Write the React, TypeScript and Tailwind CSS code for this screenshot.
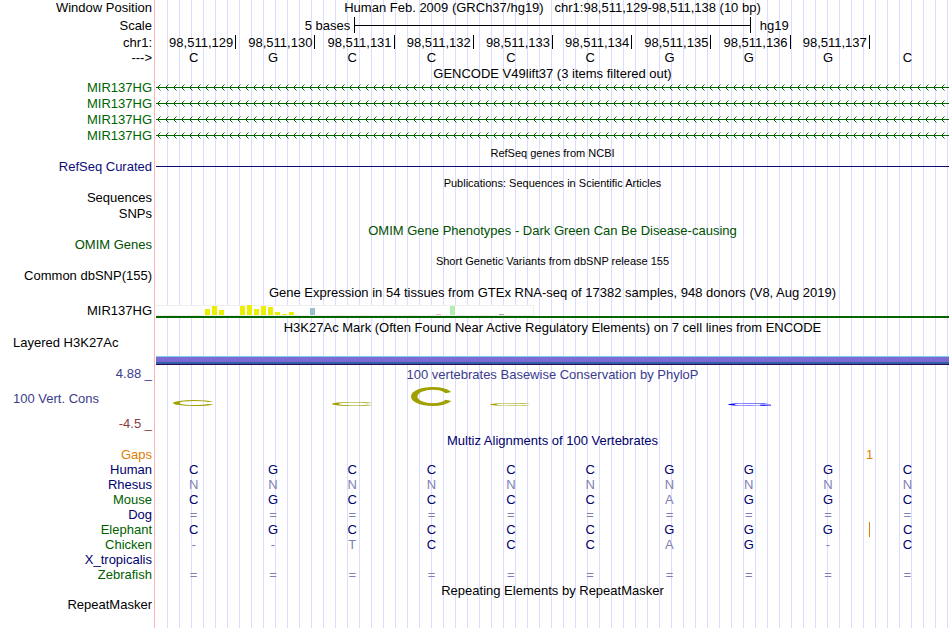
import React from 'react';
import clsx from 'clsx';

const positions = [
  '98,511,129',
  '98,511,130',
  '98,511,131',
  '98,511,132',
  '98,511,133',
  '98,511,134',
  '98,511,135',
  '98,511,136',
  '98,511,137',
];

const sequence = 'CGCCCCGGGC';

const species = [
  { name: 'Human', bases: 'CGCCCCGGGC', color: 'text-[#00006e]' },
  { name: 'Rhesus', bases: 'NNNNNNNNNN', color: 'text-[#00006e]' },
  { name: 'Mouse', bases: 'CGCCCCAGGC', color: 'text-[#006000]' },
  { name: 'Dog', bases: '==========', color: 'text-[#00006e]' },
  { name: 'Elephant', bases: 'CGCCCCGGGC', color: 'text-[#006000]', insertAfter: 8 },
  { name: 'Chicken', bases: '--TCCCAG-C', color: 'text-[#006000]' },
  { name: 'X_tropicalis', bases: '          ', color: 'text-[#00006e]' },
  { name: 'Zebrafish', bases: '==========', color: 'text-[#006000]' },
];

// one slot per tissue, 54 in all; only the expressed ones are listed
const tissues = [
  { slot: 7, level: 6, fill: '#eeee00' },
  { slot: 8, level: 9, fill: '#eeee00' },
  { slot: 9, level: 5, fill: '#eeee00' },
  { slot: 12, level: 9, fill: '#eeee00' },
  { slot: 13, level: 10, fill: '#eeee00' },
  { slot: 14, level: 6, fill: '#eeee00' },
  { slot: 15, level: 9, fill: '#eeee00' },
  { slot: 16, level: 8, fill: '#eeee00' },
  { slot: 17, level: 3, fill: '#eeee00' },
  { slot: 18, level: 1, fill: '#eeee00' },
  { slot: 19, level: 3, fill: '#eeee00' },
  { slot: 22, level: 7, fill: '#9ac0cd' },
  { slot: 40, level: 1, fill: '#ffb6c1' },
  { slot: 42, level: 9, fill: '#b4eeb4' },
  { slot: 49, level: 1, fill: '#a0a0a0' },
];

// height of the logo mark in each column, null where nothing is drawn
const logo = [
  { height: 6, fill: '#a0a000' },
  null,
  { height: 4, fill: '#a0a000' },
  { height: 19, fill: '#a0a000' },
  { height: 3, fill: '#a0a000' },
  null,
  null,
  { height: 3, fill: '#0000ff', bar: true },
  null,
  null,
];

type RowProps = {
  label?: string;
  height?: string;
  labelClass?: string;
  children?: React.ReactNode;
};

function Row({ label, height = 'h-[15px]', labelClass, children }: RowProps) {
  return (
    <div className={clsx('grid grid-cols-[156px_1fr]', height)}>
      <div className={clsx('whitespace-pre pr-1 text-right', labelClass)}>{label}</div>
      <div className="flex min-w-0 items-center">{children}</div>
    </div>
  );
}

type TitleProps = {
  children: React.ReactNode;
  className?: string;
};

function Title({ children, className }: TitleProps) {
  return <h2 className={clsx('w-full whitespace-pre text-center', className)}>{children}</h2>;
}

function Transcript() {
  return (
    <svg className="h-4 w-full" aria-hidden="true" shapeRendering="crispEdges">
      <rect width="100%" height="16" fill="url(#strand)" />
      <rect y="7" width="100%" height="1" fill="#006400" />
    </svg>
  );
}

function Expression() {
  return (
    <div className="flex h-full w-full flex-col justify-end border-b-2 border-[#006400]">
      <svg width="378" height="11" aria-hidden="true" shapeRendering="crispEdges">
        <rect width="378" height="11" fill="#eeeeee" />
        <rect x="0" y="1" width="377" height="9" fill="#ffffff" />
        {tissues.map((t) => (
          <rect key={t.slot} x={t.slot * 7} y={10 - t.level} width="5" height={t.level} fill={t.fill} />
        ))}
      </svg>
    </div>
  );
}

function Alignment() {
  return (
    <table className="w-full table-fixed border-collapse">
      <colgroup>
        <col className="w-[156px]" />
      </colgroup>
      <tbody>
        <tr className="h-[15px] text-[#e08000]">
          <th scope="row" className="p-0 pr-1 text-right font-normal">Gaps</th>
          <td colSpan={8} className="p-0" />
          <td colSpan={2} className="p-0 text-center">1</td>
        </tr>
        {species.map((s) => (
          <tr key={s.name} className="h-[15px]">
            <th scope="row" className={clsx('p-0 pr-1 text-right font-normal', s.color)}>{s.name}</th>
            {s.bases.split('').map((base, i) => (
              <td
                key={i}
                className={clsx(
                  'p-0 pr-1 text-center',
                  base === species[0].bases[i] ? 'text-[#00006e]' : 'text-[#8080b4]',
                  s.insertAfter === i && 'border-r border-[#e08000]'
                )}
              >
                {base}
              </td>
            ))}
          </tr>
        ))}
      </tbody>
    </table>
  );
}

export default function App() {
  return (
    <main className="relative min-h-screen bg-white pr-px font-['Liberation_Sans',Arial,sans-serif] text-[13px] leading-[15px] text-black">
      <svg className="absolute size-0" aria-hidden="true">
        <defs>
          <pattern id="strand" width="8" height="16" patternUnits="userSpaceOnUse">
            <path d="M1 7h1v1h-1z M2 6h1v3h-1z M3 5h1v1h-1z M3 9h1v1h-1z" fill="#006400" />
            <path d="M4 4h1v1h-1z M4 10h1v1h-1z" fill="#80b280" />
          </pattern>
        </defs>
      </svg>
      {/* guide lines behind every track */}
      <div className="absolute inset-y-0 left-[154px] right-px border-l border-[#ffb4b4] pl-px">
        <div className="h-full bg-[repeating-linear-gradient(to_right,transparent_0px,transparent_11px,#dcdcff_11px,#dcdcff_12px)]" />
      </div>

      <div className="relative">
        <Row label="Window Position" height="h-4">
          <h1 className="w-full self-start whitespace-pre text-center">
            {'Human Feb. 2009 (GRCh37/hg19)   chr1:98,511,129-98,511,138 (10 bp)'}
          </h1>
        </Row>
        <Row label="Scale" height="h-[18px]" labelClass="pt-0.5">
          <div className="grid w-full grid-cols-4 items-center">
            <span className="pr-1 text-right">5 bases</span>
            <div className="col-span-2 flex h-4 items-center border-x border-black">
              <div className="h-px w-full bg-black" />
            </div>
            <span className="pl-[9px]">hg19</span>
          </div>
        </Row>
        <Row label="chr1:" height="h-4" labelClass="pt-px">
          <div className="grid w-full grid-cols-10 pl-px">
            {positions.map((p) => (
              <div key={p} className="flex h-[14px] items-center justify-end border-r border-black pr-[2px]">{p}</div>
            ))}
          </div>
        </Row>
        <Row label="--->" height="h-[14px]">
          <div className="grid w-full grid-cols-10 text-center">
            {sequence.split('').map((base, i) => (
              <span key={i} className="pr-1">{base}</span>
            ))}
          </div>
        </Row>

        <Row height="h-4">
          <Title className="pt-0.5">GENCODE V49lift37 (3 items filtered out)</Title>
        </Row>
        {[1, 2, 3, 4].map((n) => (
          <Row key={n} label="MIR137HG" height="h-4" labelClass="text-[#006400]">
            <Transcript />
          </Row>
        ))}

        <Row>
          <Title className="pt-0.5 text-[11px]">RefSeq genes from NCBI</Title>
        </Row>
        <Row label="RefSeq Curated" labelClass="text-[#0c0c78]">
          <div className="h-px w-full bg-[#0c0c78]" />
        </Row>
        <Row height="h-4">
          <Title className="pt-0.5 text-[11px]">Publications: Sequences in Scientific Articles</Title>
        </Row>
        <Row label="Sequences" height="h-4" />
        <Row label="SNPs" height="h-4" />
        <Row>
          <Title className="pt-px text-[#005000]">OMIM Gene Phenotypes - Dark Green Can Be Disease-causing</Title>
        </Row>
        <Row label="OMIM Genes" labelClass="text-[#005000]" />
        <Row height="h-4">
          <Title className="pt-0.5 text-[11px]">Short Genetic Variants from dbSNP release 155</Title>
        </Row>
        <Row label="Common dbSNP(155)" height="h-4" />

        <Row height="h-4">
          <Title>Gene Expression in 54 tissues from GTEx RNA-seq of 17382 samples, 948 donors (V8, Aug 2019)</Title>
        </Row>
        <Row label="MIR137HG" height="h-[18px]" labelClass="pt-[3px]">
          <Expression />
        </Row>

        <Row height="h-[17px]">
          <Title className="pt-0.5">H3K27Ac Mark (Often Found Near Active Regulatory Elements) on 7 cell lines from ENCODE</Title>
        </Row>
        <div className="grid h-[30px] grid-cols-[156px_1fr]">
          <div className="pl-[13px]">Layered H3K27Ac</div>
          <div className="flex flex-col justify-end">
            <div className="h-px bg-[#78d2f5]" />
            <div className="h-[5px] bg-[#7d69d2]" />
            <div className="h-[2px] bg-[#325faa]" />
            <div className="h-px bg-[#280a50]" />
          </div>
        </div>

        <Row label="4.88 _" height="h-[18px]" labelClass="pt-px text-[#3c3c8c]">
          <Title className="text-[#3c3c8c]">100 vertebrates Basewise Conservation by PhyloP</Title>
        </Row>
        <div className="grid h-[30px] grid-cols-[156px_1fr]">
          <div className="flex items-center pl-[13px] text-[#3c3c8c]">100 Vert. Cons</div>
          <div className="grid grid-cols-10 items-end pb-[7px]">
            {logo.map((l, i) => (
              <div key={i} className="pl-[17px]">
                {l && (
                  <svg className="block" width="43" height={l.height} viewBox="0 0 20 20" preserveAspectRatio="none" aria-hidden="true">
                    <ellipse cx="10" cy="10" rx="8.5" ry="8.5" fill="none" stroke={l.fill} strokeWidth="3" pathLength="100" strokeDasharray="0 8 84 8" />
                    {l.bar && <rect x="15" y="11" width="5" height="6" fill={l.fill} />}
                  </svg>
                )}
              </div>
            ))}
          </div>
        </div>
        <Row label="-4.5 _" height="h-5" labelClass="pt-[3px] text-[#8c3c3c]" />

        <Row height="h-[14px]">
          <Title className="text-[#00006e]">Multiz Alignments of 100 Vertebrates</Title>
        </Row>
        <Alignment />

        <Row>
          <Title className="pt-px">Repeating Elements by RepeatMasker</Title>
        </Row>
        <Row label="RepeatMasker" />
      </div>
    </main>
  );
}
